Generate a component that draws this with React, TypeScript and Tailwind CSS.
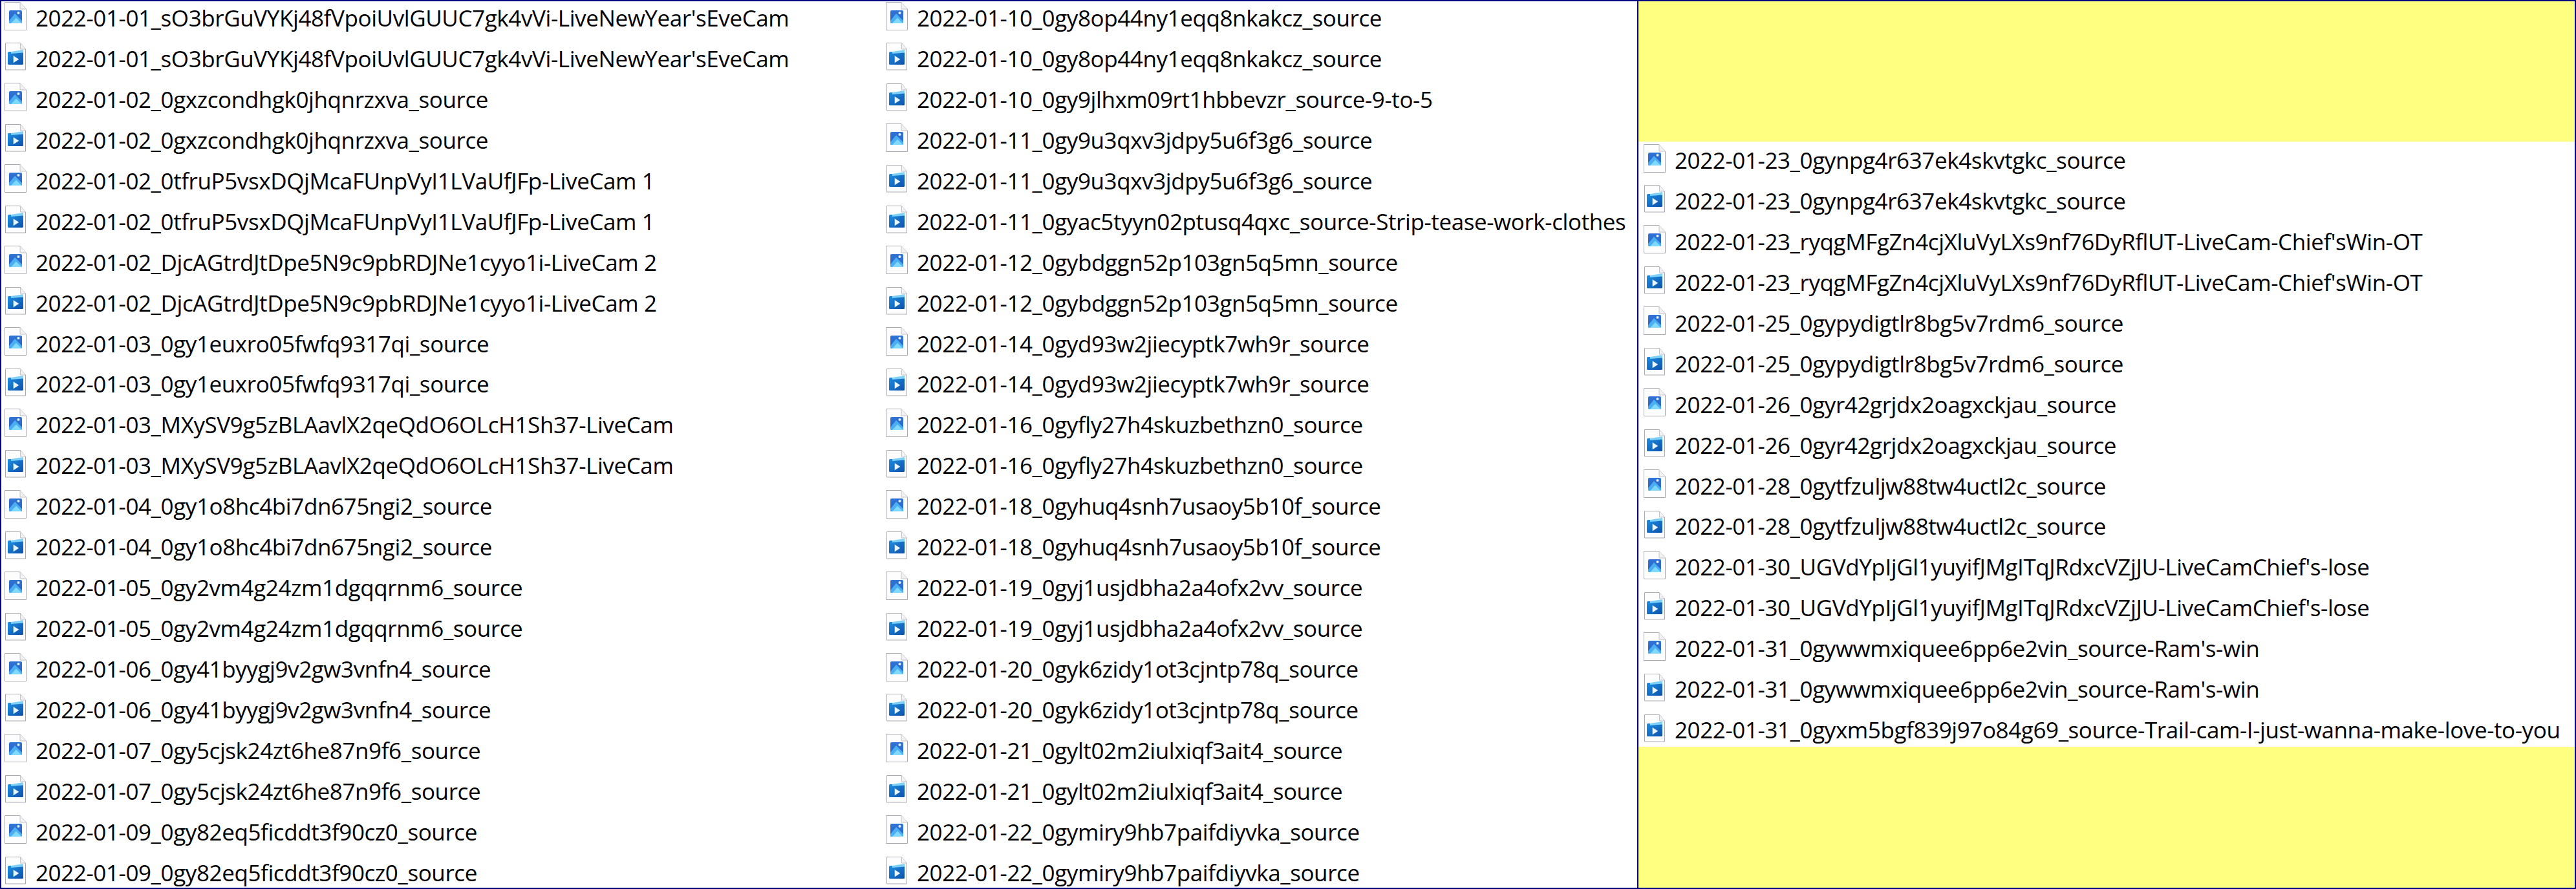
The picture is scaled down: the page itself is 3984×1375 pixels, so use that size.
type Kind = "pic" | "vid";
type Item = { name: string; kind: Kind };

const both = (name: string): Item[] => [
  { name, kind: "pic" },
  { name, kind: "vid" },
];
const vid = (name: string): Item[] => [{ name, kind: "vid" }];

const col1: Item[] = [
  ...both("2022-01-01_sO3brGuVYKj48fVpoiUvlGUUC7gk4vVi-LiveNewYear'sEveCam"),
  ...both("2022-01-02_0gxzcondhgk0jhqnrzxva_source"),
  ...both("2022-01-02_0tfruP5vsxDQjMcaFUnpVyI1LVaUfJFp-LiveCam 1"),
  ...both("2022-01-02_DjcAGtrdJtDpe5N9c9pbRDJNe1cyyo1i-LiveCam 2"),
  ...both("2022-01-03_0gy1euxro05fwfq9317qi_source"),
  ...both("2022-01-03_MXySV9g5zBLAavlX2qeQdO6OLcH1Sh37-LiveCam"),
  ...both("2022-01-04_0gy1o8hc4bi7dn675ngi2_source"),
  ...both("2022-01-05_0gy2vm4g24zm1dgqqrnm6_source"),
  ...both("2022-01-06_0gy41byygj9v2gw3vnfn4_source"),
  ...both("2022-01-07_0gy5cjsk24zt6he87n9f6_source"),
  ...both("2022-01-09_0gy82eq5ficddt3f90cz0_source"),
];

const col2: Item[] = [
  ...both("2022-01-10_0gy8op44ny1eqq8nkakcz_source"),
  ...vid("2022-01-10_0gy9jlhxm09rt1hbbevzr_source-9-to-5"),
  ...both("2022-01-11_0gy9u3qxv3jdpy5u6f3g6_source"),
  ...vid("2022-01-11_0gyac5tyyn02ptusq4qxc_source-Strip-tease-work-clothes"),
  ...both("2022-01-12_0gybdggn52p103gn5q5mn_source"),
  ...both("2022-01-14_0gyd93w2jiecyptk7wh9r_source"),
  ...both("2022-01-16_0gyfly27h4skuzbethzn0_source"),
  ...both("2022-01-18_0gyhuq4snh7usaoy5b10f_source"),
  ...both("2022-01-19_0gyj1usjdbha2a4ofx2vv_source"),
  ...both("2022-01-20_0gyk6zidy1ot3cjntp78q_source"),
  ...both("2022-01-21_0gylt02m2iulxiqf3ait4_source"),
  ...both("2022-01-22_0gymiry9hb7paifdiyvka_source"),
];

const col3: Item[] = [
  ...both("2022-01-23_0gynpg4r637ek4skvtgkc_source"),
  ...both("2022-01-23_ryqgMFgZn4cjXluVyLXs9nf76DyRflUT-LiveCam-Chief'sWin-OT"),
  ...both("2022-01-25_0gypydigtlr8bg5v7rdm6_source"),
  ...both("2022-01-26_0gyr42grjdx2oagxckjau_source"),
  ...both("2022-01-28_0gytfzuljw88tw4uctl2c_source"),
  ...both("2022-01-30_UGVdYpIjGl1yuyifJMgITqJRdxcVZjJU-LiveCamChief's-lose"),
  ...both("2022-01-31_0gywwmxiquee6pp6e2vin_source-Ram's-win"),
  ...vid("2022-01-31_0gyxm5bgf839j97o84g69_source-Trail-cam-I-just-wanna-make-love-to-you"),
];

function FileIcon({ kind }: { kind: Kind }) {
  if (kind === "pic") {
    return (
      <svg viewBox="0 0 34 44" className="w-[34px] h-[44px] shrink-0">
        <defs>
          <linearGradient id="picBg" x1="0" y1="0" x2="0" y2="1">
            <stop offset="0" stopColor="#2f74d6" />
            <stop offset="1" stopColor="#2a63c4" />
          </linearGradient>
        </defs>
        <path d="M0.5 0.5H24L33.5 11V43.5H0.5Z" fill="#fdfdfd" stroke="#a9a9b4" />
        <path d="M24 0.5V11H33.5" fill="#f2f2f2" stroke="#c4c4cc" />
        <rect x="7" y="13" width="20" height="20" rx="2" fill="url(#picBg)" />
        <circle cx="21.5" cy="17" r="2" fill="#e3f1ff" />
        <path d="M7 29L16 18L27 29V31A2 2 0 0 1 25 33H9A2 2 0 0 1 7 31Z" fill="#4aaef2" />
        <path d="M10 33L18 24.5L26.5 33Z" fill="#80d8fa" />
      </svg>
    );
  }
  return (
    <svg viewBox="0 0 34 44" className="w-[34px] h-[44px] shrink-0">
      <defs>
        <linearGradient id="vidBg" x1="0" y1="0" x2="1" y2="1">
          <stop offset="0" stopColor="#1c8fe2" />
          <stop offset="1" stopColor="#0f50aa" />
        </linearGradient>
      </defs>
      <path d="M1.5 1.5H24.5L32.5 11V43H1.5Z" fill="#fdfdfd" stroke="#a9a9b4" />
      <path d="M24.5 1.5V11H32.5" fill="#f2f2f2" stroke="#c4c4cc" />
      <rect x="5" y="15" width="24" height="20" rx="1.5" fill="url(#vidBg)" />
      <path d="M10 15L29 12V16.5L10 18Z" fill="#7fd0f7" />
      <path d="M13.7 21.3L22.3 26.8L13.7 32.3Z" fill="#eaf6ff" />
    </svg>
  );
}

function Row({ item }: { item: Item }) {
  return (
    <div className="flex items-center h-[45px] shrink-0">
      <FileIcon kind={item.kind} />
      <span className="ml-[14px] pt-[6px] whitespace-pre text-[35px] leading-[45px] tracking-[-0.4px] text-black">
        {item.name}
      </span>
    </div>
  );
}

export default function App() {
  return (
    <div className="w-[3984px] h-[1375px] flex border-2 border-[#000080] bg-white overflow-hidden font-['Open_Sans',sans-serif]">
      <div className="w-[1363px] shrink-0 flex flex-col gap-[17.95px] pl-[5px] overflow-hidden">
        {col1.map((item, i) => (
          <Row key={i} item={item} />
        ))}
      </div>
      <div className="w-[1167px] shrink-0 flex flex-col gap-[17.95px] pl-[5px] overflow-hidden">
        {col2.map((item, i) => (
          <Row key={i} item={item} />
        ))}
      </div>
      <div className="flex-1 flex flex-col border-l-2 border-[#000080] bg-[#ffff80]">
        <div className="h-[217px]" />
        <div className="h-[936px] bg-white flex flex-col gap-[17.95px] pl-[8px] pt-[3px] overflow-hidden">
          {col3.map((item, i) => (
            <Row key={i} item={item} />
          ))}
        </div>
      </div>
    </div>
  );
}
